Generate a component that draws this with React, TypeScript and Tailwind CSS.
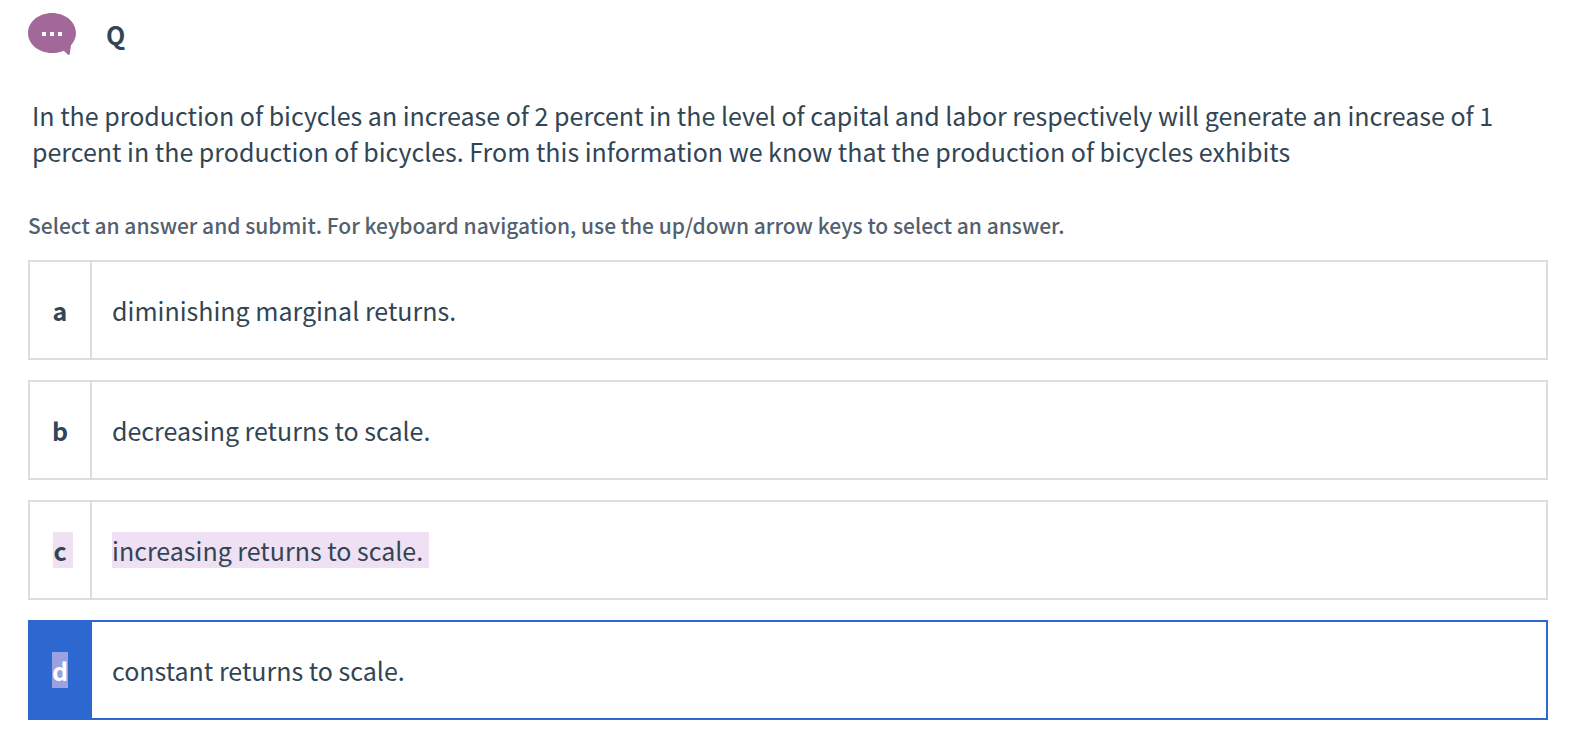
import { useState } from 'react'

type Answer = { letter: string; text: string; mark?: 'all' | 'letter' }

const answers: Answer[] = [
  { letter: 'a', text: 'diminishing marginal returns.' },
  { letter: 'b', text: 'decreasing returns to scale.' },
  { letter: 'c', text: 'increasing returns to scale.', mark: 'all' },
  { letter: 'd', text: 'constant returns to scale.', mark: 'letter' },
]

function BubbleIcon() {
  return (
    <svg className="h-[42px] w-12 shrink-0" viewBox="0 0 48 42" aria-hidden="true">
      <path
        d="M24 0C37.3 0 48 8.9 48 20c0 4.600-1.900 8.900-5 12.300L41.700 41c-.2 1-1.200 1.200-1.900.6L35.800 37.700C32.300 39.200 28.300 40 24 40 10.700 40 0 31.100 0 20S10.700 0 24 0Z"
        fill="#a26899"
      />
      <path d="M14 19h4v4h-4zM22 19h4v4h-4zM30 19h4v4h-4z" fill="#fff" />
    </svg>
  )
}

function AnswerRow({ answer, checked, onSelect }: { answer: Answer; checked: boolean; onSelect: () => void }) {
  const letterMark =
    answer.mark === 'all' ? '-mr-1.5 bg-[#f0e0f3] pr-1.5' : answer.mark === 'letter' ? 'bg-[#9ca2e0]' : ''

  return (
    <label
      className={`flex min-h-[100px] cursor-pointer border-2 has-focus-visible:outline-2 has-focus-visible:outline-offset-2 has-focus-visible:outline-[#2d67d0] ${
        checked ? 'border-[#2d67d0]' : 'border-[#dadde2]'
      }`}
    >
      <input type="radio" name="answer" value={answer.letter} checked={checked} onChange={onSelect} className="appearance-none outline-none" />
      <span
        className={`flex w-[62px] shrink-0 items-center justify-center border-r-2 font-bold ${
          checked ? 'border-[#2d67d0] bg-[#2d67d0] text-white' : 'border-[#dadde2]'
        }`}
      >
        <span className={letterMark}>{answer.letter}</span>
      </span>
      <span className="flex flex-1 items-center px-5">
        <span className={answer.mark === 'all' ? 'bg-[#f0e0f3] pr-1.5' : ''}>{answer.text}</span>
      </span>
    </label>
  )
}

export default function App() {
  const [selected, setSelected] = useState('d')

  return (
    <main className="bg-white px-7 pt-[13px] pb-[18px] font-['Noto_Sans_CJK_SC','Noto_Sans',sans-serif] text-[25px] leading-9 text-[#314554]">
      <header className="flex items-center gap-[30px]">
        <BubbleIcon />
        <h1 className="font-bold">Q</h1>
      </header>

      <p className="mt-[42px] px-1">
        In the production of bicycles an increase of 2 percent in the level of capital and labor respectively will generate an increase of 1
        percent in the production of bicycles. From this information we know that the production of bicycles exhibits
      </p>

      <fieldset className="mt-[38px]">
        <legend className="text-[21px] font-medium text-[#53616f]">
          Select an answer and submit. For keyboard navigation, use the up/down arrow keys to select an answer.
        </legend>
        <div className="mt-[17px] flex flex-col gap-5">
          {answers.map((answer) => (
            <AnswerRow key={answer.letter} answer={answer} checked={answer.letter === selected} onSelect={() => setSelected(answer.letter)} />
          ))}
        </div>
      </fieldset>
    </main>
  )
}
